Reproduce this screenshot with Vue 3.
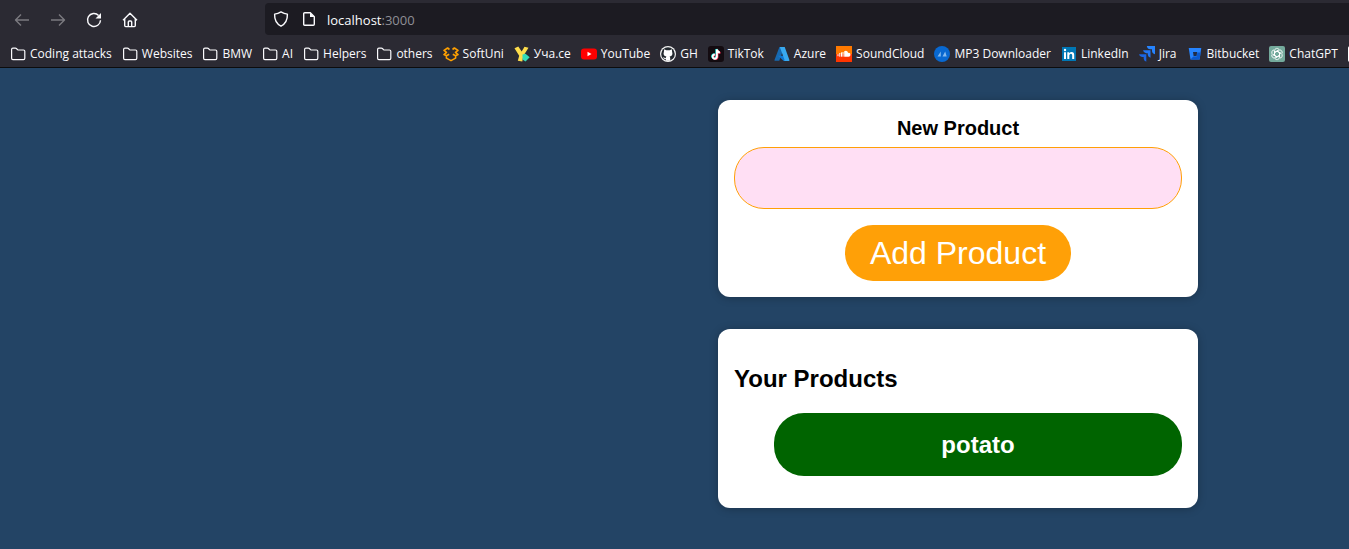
<script setup>
import { ref } from 'vue'

const bookmarks = [
  { label: 'Coding attacks', icon: 'folder' },
  { label: 'Websites', icon: 'folder' },
  { label: 'BMW', icon: 'folder' },
  { label: 'AI', icon: 'folder' },
  { label: 'Helpers', icon: 'folder' },
  { label: 'others', icon: 'folder' },
  { label: 'SoftUni', icon: 'softuni' },
  { label: 'Уча.се', icon: 'ucha' },
  { label: 'YouTube', icon: 'youtube' },
  { label: 'GH', icon: 'github' },
  { label: 'TikTok', icon: 'tiktok' },
  { label: 'Azure', icon: 'azure' },
  { label: 'SoundCloud', icon: 'soundcloud' },
  { label: 'MP3 Downloader', icon: 'mp3' },
  { label: 'LinkedIn', icon: 'linkedin' },
  { label: 'Jira', icon: 'jira' },
  { label: 'Bitbucket', icon: 'bitbucket' },
  { label: 'ChatGPT', icon: 'chatgpt' },
  { label: '', icon: 'more' }
]

const products = ref(['potato'])
const productName = ref('')

function addProduct() {
  const name = productName.value.trim()
  if (!name) return
  products.value.push(name)
  productName.value = ''
}
</script>

<template>
  <div class="window">
    <header class="chrome">
      <div class="toolbar">
        <nav class="nav" aria-label="Navigation">
          <button class="nav-button dim" type="button" aria-label="Back">
            <svg viewBox="0 0 16 16"><path d="M15 8H1.5M7 2.5 1.5 8 7 13.500" /></svg>
          </button>
          <button class="nav-button dim" type="button" aria-label="Forward">
            <svg viewBox="0 0 16 16"><path d="M1 8h13.500M9 2.500 14.500 8 9 13.500" /></svg>
          </button>
          <button class="nav-button" type="button" aria-label="Reload">
            <svg viewBox="0 0 16 16"><path d="M12.600 3.400A6.500 6.500 0 1 0 14.500 8.200" /><path class="solid" d="M15 1v5.500H9.500z" /></svg>
          </button>
          <button class="nav-button" type="button" aria-label="Home">
            <svg viewBox="0 0 16 16"><path d="M1 8.300 8 1.200l7 7.100M2.700 7v6.600q0 1 1 1h8.600q1 0 1-1V7M6.300 14.500V10q0-1 1-1h1.400q1 0 1 1v4.500" /></svg>
          </button>
        </nav>
        <div class="address" role="textbox" aria-label="Address">
          <svg class="line" viewBox="0 0 16 16"><path d="M8 .9q3 1.900 6.400 2.200C14.600 9 12.400 13 8 15.200 3.600 13 1.400 9 1.600 3.100 5 2.800 8 .9 8 .9z" /></svg>
          <svg class="line page" viewBox="0 0 16 16"><path d="M3.700 1.700h5.600l4 4v7.600q0 1-1 1H3.700q-1 0-1-1V2.700q0-1 1-1z" /><path class="solid" d="M9 1.500V6h4.500z" /></svg>
          <span class="url">localhost<span class="port">:3000</span></span>
        </div>
      </div>

      <nav class="bookmarks" aria-label="Bookmarks">
        <a v-for="item in bookmarks" :key="item.icon + item.label" class="bookmark" href="#" :aria-label="item.label || 'Bookmark'">
          <svg viewBox="0 0 16 16" aria-hidden="true">
            <path v-if="item.icon === 'folder'" fill="none" stroke="#fbfbfe" stroke-width="1.200" d="M1.600 3.400q0-1.300 1.300-1.300h2.500q.6 0 1 .4l1.100 1.100q.4.400 1 .4h5q1.300 0 1.300 1.300v7q0 1.300-1.300 1.300H2.900q-1.300 0-1.300-1.300z" />
            <g v-else-if="item.icon === 'softuni'" fill="none" stroke="#ffa000" stroke-width="1.600" stroke-linejoin="round">
              <path d="M6.500 3.500 4.600 2 1 4.300l2.500 2L1 8.600l2.400 1.200 2.800-1.500M9.500 3.500 11.400 2 15 4.300l-2.500 2L15 8.600l-2.400 1.200-2.800-1.500M3.400 9.800v2.300L8 14.600l4.600-2.500V9.800" />
            </g>
            <g v-else-if="item.icon === 'ucha'">
              <path fill="#ffdd4b" d="M.5 2.200 4.300.5l3.400 5L10.500.8l4 1L9.300 10l-1 5.500-4.500-.8L5.200 9.800z" />
              <path fill="#35dbb7" d="m8.500 8.500 3-.7 4.200 3.500-4.200 4.200-3-2z" />
            </g>
            <g v-else-if="item.icon === 'youtube'">
              <rect y="2.500" width="16" height="11" rx="3" fill="#f00" />
              <path fill="#fff" d="m6.500 5.700 4 2.300-4 2.300z" />
            </g>
            <g v-else-if="item.icon === 'github'">
              <circle cx="8" cy="8" r="8" fill="#f5f5f5" />
              <circle cx="8" cy="8" r="6.800" fill="#24292f" />
              <path fill="#fff" d="M4.200 3.200 6.300 4.300h3.400l2.100-1.100.3 2.500q1.300 4-2.500 4.800.6.600.6 1.500v2.800H5.800V13q-2 .3-2.800-1.800l1.300.4q.7.800 1.500.4 0-1 .6-1.500Q2.600 9.700 3.900 5.700z" />
            </g>
            <g v-else-if="item.icon === 'tiktok'">
              <rect width="16" height="16" rx="3" fill="#130b10" />
              <g fill="none" stroke-width="1.900">
                <path stroke="#25f4ee" d="M8.300 3v7.200a2.100 2.100 0 1 1-2-2.100M8.300 3q.4 2.700 3 2.900" />
                <path stroke="#fe2c55" d="M9.500 4v7a2.100 2.100 0 1 1-2-2.100M9.500 4q.4 2.700 3 2.900" />
                <path stroke="#fff" d="M8.900 3.500v7.100a2.100 2.100 0 1 1-2-2.100M8.900 3.500q.4 2.700 3 2.900" />
              </g>
            </g>
            <g v-else-if="item.icon === 'azure'">
              <path fill="#1769b0" d="M5.400 1h4.800L5.300 14.700H.8Q.3 14.500.5 14z" />
              <path fill="#0f78d4" d="M4 9.700h7.200l1.500 5.300H9.800z" />
              <path fill="#38a9f0" d="M5.800 1h4.900l4.800 13.200q0 .7-.7.8H10q.8-.4.500-1.200z" />
            </g>
            <g v-else-if="item.icon === 'soundcloud'">
              <rect width="16" height="16" fill="#ff7900" />
              <rect y="8" width="16" height="8" fill="#ff3500" />
              <path fill="#fff" d="M8.200 5.200q3-1.200 4 1.700 2.300-.3 2.300 1.900 0 1.900-2 1.900H8.200z" />
              <path stroke="#fff" d="M2 8.200v2M3.800 7v3.700M5.500 6.400v4.300M7 6v4.700" />
            </g>
            <g v-else-if="item.icon === 'mp3'">
              <circle cx="8" cy="8" r="8" fill="#0868d1" />
              <path fill="#82b9ef" d="m3.500 10.500 3.300-5v5zM8.500 10.500l2.700-5 1.500 5z" />
            </g>
            <g v-else-if="item.icon === 'linkedin'">
              <rect x="1" y="1" width="14" height="14" fill="#0077b5" />
              <circle cx="4" cy="4" r="1.200" fill="#fff" />
              <path fill="#fff" d="M3 6.200h2V13H3zM6.300 6.200h1.900v1q1-1.200 2.500-1.200 2.500 0 2.500 3v4h-2V9.300q0-1.600-1.300-1.600T8.300 9.300V13h-2z" />
            </g>
            <g v-else-if="item.icon === 'jira'">
              <path fill="#1c66e2" d="M0 8.200h7.300v7.500q-2.600-.8-2.600-3v-1.600H3Q.7 11 0 8.200z" />
              <path fill="#2275f2" d="M4 4.300h7.500v7.500q-2.700-.8-2.700-3V7.300H7.100Q4.700 7.200 4 4.300z" />
              <path fill="#2684ff" d="M7.800 0H16v8.200q-3-.8-3-3.200V3.200h-1.800Q8.500 3.200 7.800 0z" />
            </g>
            <g v-else-if="item.icon === 'bitbucket'">
              <path fill="#2684ff" d="M1.700 2h12.600l-1.700 11.500H3.500z" />
              <path fill="#0b59cf" d="m13.600 6.500-1 7H3.500l2.800-3h3.400l.6-4z" />
              <path fill="#202d4a" d="M6 6h4.200l-.7 4H6.600z" />
            </g>
            <g v-else-if="item.icon === 'chatgpt'">
              <rect width="16" height="16" rx="2" fill="#74aa9c" />
              <g fill="none" stroke="#fff" stroke-width=".8">
                <path v-for="angle in [0, 60, 120, 180, 240, 300]" :key="angle" d="M5.500 9.400V4.800a2.500 2.500 0 0 1 4.600-1.300M5.500 6.500 8 5.100l4 2.300" :transform="`rotate(${angle} 8 8)`" />
              </g>
            </g>
            <g v-else>
              <rect width="16" height="16" rx="2" fill="#fff" />
              <circle cx="8" cy="8" r="5.500" fill="none" stroke="#111" stroke-width="2.500" />
              <path stroke="#111" stroke-width="2" d="M3 8h10" />
            </g>
          </svg>
          <span v-if="item.label">{{ item.label }}</span>
        </a>
      </nav>
    </header>

    <main class="content">
      <form class="card form" @submit.prevent="addProduct">
        <label class="label" for="product">New Product</label>
        <input id="product" v-model="productName" class="field" type="text" />
        <button class="submit" type="submit">Add Product</button>
      </form>

      <section class="card list">
        <h2 class="heading">Your Products</h2>
        <ul class="products">
          <li v-for="(product, index) in products" :key="index" class="product">{{ product }}</li>
        </ul>
      </section>
    </main>
  </div>
</template>

<style>
body {
  margin: 0;
  background: #234465;
}
</style>

<style scoped>
.window {
  min-height: 100vh;
  overflow: hidden;
  background: #234465;
  font-family: "Liberation Sans", Arial, sans-serif;
}

.chrome {
  background: #2b2a33;
  border-bottom: 1px solid #0c0c0d;
  color: #fbfbfe;
  font-family: "Open Sans", "Noto Sans", sans-serif;
}

.toolbar {
  display: flex;
  gap: 117px;
  height: 32px;
  padding: 3px 0 4px 4px;
}

.nav {
  display: flex;
  padding-top: 2px;
}

.nav-button {
  display: grid;
  place-items: center;
  width: 36px;
  padding: 0;
  border: 0;
  background: none;
  color: inherit;
}

.nav-button.dim {
  color: #7b7a80;
}

.nav-button svg,
.line {
  width: 16px;
  height: 16px;
  fill: none;
  stroke: currentColor;
  stroke-width: 1.4;
  stroke-linejoin: round;
}

.solid {
  fill: currentColor;
  stroke: none;
}

.address {
  display: flex;
  flex: 1;
  align-items: center;
  padding-left: 8px;
  border-radius: 4px 0 0 4px;
  background: #1c1b22;
}

.page {
  margin-left: 12px;
}

.url {
  margin-left: 10px;
  padding-top: 2px;
  font-size: 13px;
  line-height: 20px;
}

.port {
  color: #8f8f96;
}

.bookmarks {
  display: flex;
  box-sizing: border-box;
  gap: 10px;
  height: 28px;
  padding: 2px 0 0 10px;
}

.bookmark {
  display: flex;
  flex: none;
  align-items: center;
  gap: 4px;
  color: inherit;
  font-size: 12px;
  line-height: 16px;
  text-decoration: none;
  white-space: nowrap;
}

.bookmark svg {
  flex: none;
  width: 16px;
  height: 16px;
}

.content {
  display: flex;
  flex-direction: column;
  align-items: flex-end;
  gap: 32px;
  padding: 32px 151px;
}

.card {
  box-sizing: border-box;
  width: 100%;
  max-width: 480px;
  padding: 16px;
  border-radius: 12px;
  background: #fff;
  box-shadow: 0 1px 8px rgba(0, 0, 0, 0.25);
}

.form {
  display: flex;
  flex-direction: column;
  align-items: center;
}

.label {
  margin-bottom: 6px;
  font-size: 20px;
  font-weight: bold;
  line-height: 25px;
}

.field {
  box-sizing: border-box;
  width: 100%;
  height: 62px;
  margin-bottom: 16px;
  padding: 0 24px;
  border: 1px solid #ffa007;
  border-radius: 30px;
  background: #ffdff4;
  font: inherit;
  font-size: 24px;
}

.submit {
  padding: 8px 25px;
  border: 0;
  border-radius: 28px;
  background: #ffa007;
  color: #fff;
  font: inherit;
  font-size: 32px;
  line-height: 40px;
}

.list {
  padding-bottom: 32px;
}

.heading {
  margin: 20px 0;
  font-size: 24px;
  line-height: 28px;
}

.products {
  display: grid;
  gap: 16px;
  margin: 0;
  padding-left: 40px;
  list-style: none;
}

.product {
  padding: 16px;
  border-radius: 30px;
  background: #006400;
  color: #fff;
  font-size: 24px;
  font-weight: bold;
  line-height: 31px;
  text-align: center;
}
</style>
